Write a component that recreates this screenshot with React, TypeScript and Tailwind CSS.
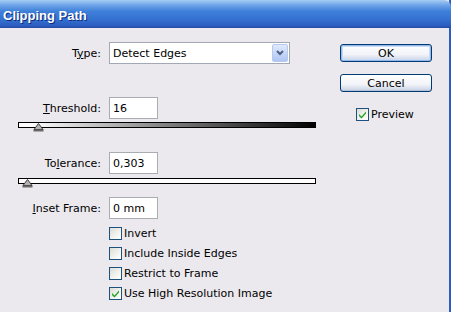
import type { ReactNode } from "react";

function Check({ checked = false }: { checked?: boolean }) {
  return (
    <span className="flex h-[13px] w-[13px] shrink-0 items-center justify-center border border-[#1c5180] bg-[linear-gradient(135deg,#dcdcd7_0%,#f4f4f0_60%,#ffffff_100%)]">
      {checked ? (
        <svg width="9" height="9" viewBox="0 0 9 9">
          <path d="M1 4 L3.5 6.5 L8 1.5 L8 3.5 L3.5 8.5 L1 6 Z" fill="#21a121" />
        </svg>
      ) : null}
    </span>
  );
}

function Thumb({ left }: { left: number }) {
  return (
    <svg
      className="absolute top-[1px]"
      style={{ left }}
      width="11"
      height="9"
      viewBox="0 0 11 9"
    >
      <path d="M5.5 0.5 L10 6.5 L1 6.5 Z" fill="#b4b4b4" stroke="#3a3a3a" strokeWidth="1" />
      <rect x="0.5" y="6.5" width="10" height="2" fill="#6a6a6a" />
    </svg>
  );
}

function Field({ label, children }: { label: ReactNode; children: ReactNode }) {
  return (
    <div className="flex items-center gap-[8px]">
      <span className="w-[101px] text-right">{label}</span>
      {children}
    </div>
  );
}

function Box({ value }: { value: string }) {
  return (
    <div className="flex h-[22px] w-[49px] items-center border border-[#a9acb0] bg-white pl-[3px]">
      {value}
    </div>
  );
}

function Button({ children, primary = false }: { children: ReactNode; primary?: boolean }) {
  return (
    <div
      className={`flex h-[18px] w-[92px] items-center justify-center rounded-[3px] border border-[#003c74] bg-[linear-gradient(180deg,#ffffff_0%,#f1f3f8_60%,#c6d0e4_100%)] ${
        primary ? "shadow-[inset_0_0_0_1px_#97b7ea,inset_0_0_0_2px_#c9dbf6]" : "shadow-[inset_0_-1px_0_#b6c1d8]"
      }`}
    >
      {children}
    </div>
  );
}

export default function App() {
  return (
    <div className="h-[320px] w-[454px] bg-white font-['DejaVu_Sans',sans-serif] text-[11px] leading-[13px] text-black">
      <div className="flex h-[312px] w-[451px] flex-col border-r-2 border-[#2c5bc3] bg-[#ebe9ed]">
        <div className="-mr-[2px] flex h-[28px] items-center rounded-tr-[7px] bg-[linear-gradient(180deg,#a6cdf4_0%,#6fa5e8_18%,#3f80da_40%,#3470cf_70%,#2b5cbf_92%,#2349a8_100%)] pl-[3px] pt-[3px] font-['Liberation_Sans',sans-serif] text-[13px] font-bold text-white [text-shadow:1px_1px_0_#0c2a7a]">
          Clipping Path
        </div>
        <div className="flex">
          <div className="w-[330px] pt-[14px]">
            <Field
              label={
                <>
                  T<u>y</u>pe:
                </>
              }
            >
              <div className="flex h-[22px] w-[181px] items-center justify-between border border-[#a3a9b4] bg-white pl-[3px] pr-[1px]">
                <span>Detect Edges</span>
                <span className="flex h-[18px] w-[16px] items-center justify-center rounded-[2px] border border-[#b6c9ee] bg-[linear-gradient(180deg,#e1eafc_0%,#c2d4f7_60%,#afc5f1_100%)]">
                  <svg width="8" height="6" viewBox="0 0 8 6">
                    <path d="M1 1 L4 4 L7 1" fill="none" stroke="#4d6185" strokeWidth="2" />
                  </svg>
                </span>
              </div>
            </Field>

            <div className="mt-[33px]">
              <Field
                label={
                  <>
                    <u>T</u>hreshold:
                  </>
                }
              >
                <Box value="16" />
              </Field>
            </div>
            <div className="relative ml-[18px] mt-[3px] h-[10px] w-[298px]">
              <div className="h-[6px] border border-black bg-[linear-gradient(90deg,#ffffff_0%,#ffffff_4%,#808080_50%,#000000_100%)]" />
              <Thumb left={15} />
            </div>

            <div className="mt-[20px]">
              <Field
                label={
                  <>
                    To<u>l</u>erance:
                  </>
                }
              >
                <Box value="0,303" />
              </Field>
            </div>
            <div className="relative ml-[18px] mt-[4px] h-[10px] w-[298px]">
              <div className="h-[6px] border border-black bg-white" />
              <Thumb left={4} />
            </div>

            <div className="mt-[9px]">
              <Field
                label={
                  <>
                    <u>I</u>nset Frame:
                  </>
                }
              >
                <Box value="0 mm" />
              </Field>
            </div>

            <div className="ml-[109px] mt-[8px] flex flex-col gap-[7px]">
              <div className="flex items-center gap-[2px]">
                <Check />
                <span>Invert</span>
              </div>
              <div className="flex items-center gap-[2px]">
                <Check />
                <span>Include Inside Edges</span>
              </div>
              <div className="flex items-center gap-[2px]">
                <Check />
                <span>Restrict to Frame</span>
              </div>
              <div className="flex items-center gap-[2px]">
                <Check checked />
                <span>Use High Resolution Image</span>
              </div>
            </div>
          </div>

          <div className="ml-[10px] flex flex-col pt-[16px]">
            <Button primary>OK</Button>
            <div className="mt-[12px]">
              <Button>Cancel</Button>
            </div>
            <div className="ml-[16px] mt-[16px] flex items-center gap-[2px]">
              <Check checked />
              <span>Preview</span>
            </div>
          </div>
        </div>
      </div>
    </div>
  );
}
